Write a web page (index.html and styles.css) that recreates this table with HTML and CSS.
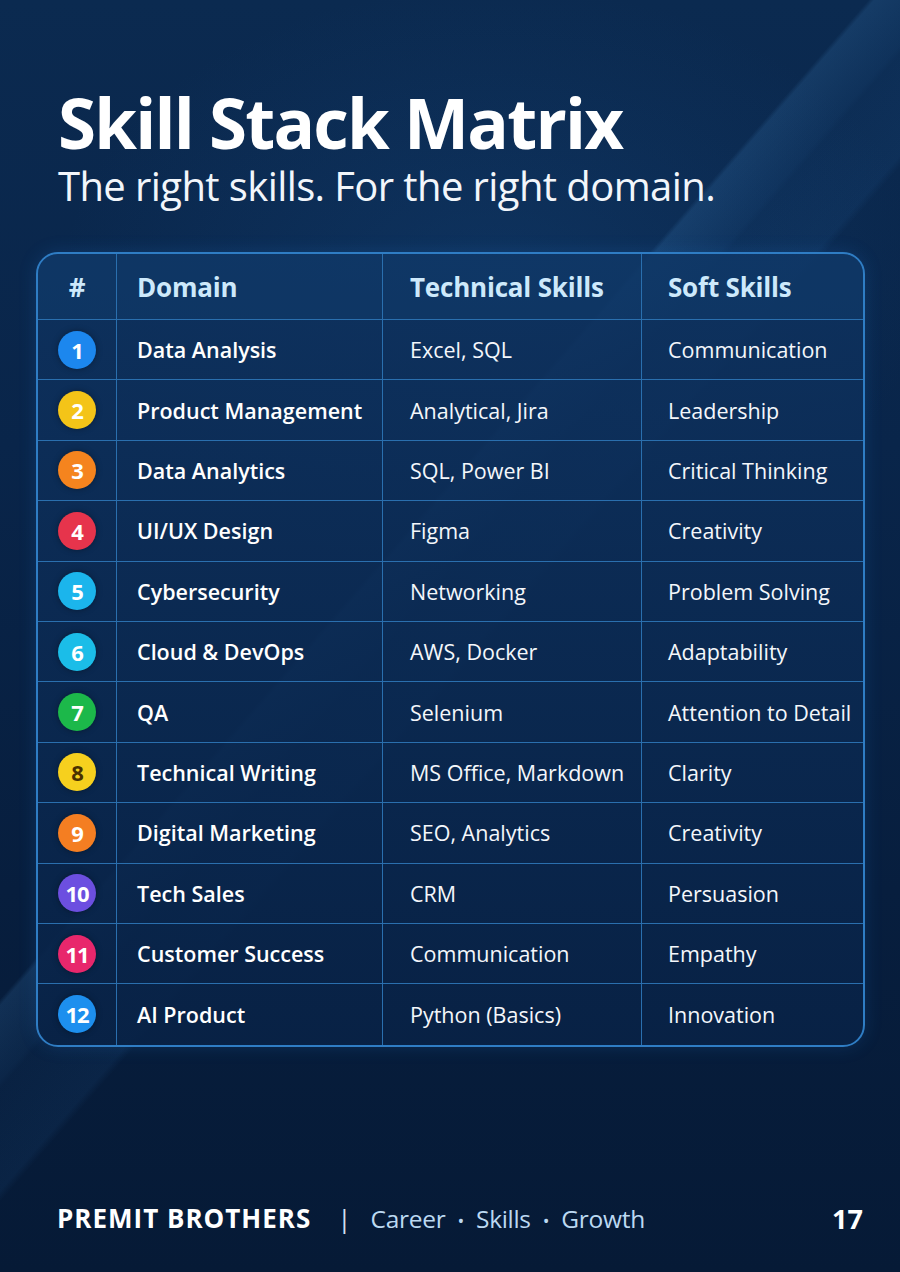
FILE: index.html
```html
<!DOCTYPE html>
<html lang="en">
<head>
<meta charset="utf-8">
<title>Skill Stack Matrix</title>
<link rel="stylesheet" href="styles.css">
</head>
<body>
<div class="page">
  <header class="hero">
    <h1 class="title">Skill Stack Matrix</h1>
    <p class="subtitle">The right skills. For the right domain.</p>
  </header>

  <div class="matrix">
    <div class="cell head num-col">#</div>
    <div class="cell head">Domain</div>
    <div class="cell head tech">Technical Skills</div>
    <div class="cell head soft">Soft Skills</div>

    <div class="cell num-col"><span class="badge c1">1</span></div>
    <div class="cell domain">Data Analysis</div>
    <div class="cell tech">Excel, SQL</div>
    <div class="cell soft">Communication</div>

    <div class="cell num-col"><span class="badge c2">2</span></div>
    <div class="cell domain">Product Management</div>
    <div class="cell tech">Analytical, Jira</div>
    <div class="cell soft">Leadership</div>

    <div class="cell num-col"><span class="badge c3">3</span></div>
    <div class="cell domain">Data Analytics</div>
    <div class="cell tech">SQL, Power BI</div>
    <div class="cell soft">Critical Thinking</div>

    <div class="cell num-col"><span class="badge c4">4</span></div>
    <div class="cell domain">UI/UX Design</div>
    <div class="cell tech">Figma</div>
    <div class="cell soft">Creativity</div>

    <div class="cell num-col"><span class="badge c5">5</span></div>
    <div class="cell domain">Cybersecurity</div>
    <div class="cell tech">Networking</div>
    <div class="cell soft">Problem Solving</div>

    <div class="cell num-col"><span class="badge c6">6</span></div>
    <div class="cell domain">Cloud &amp; DevOps</div>
    <div class="cell tech">AWS, Docker</div>
    <div class="cell soft">Adaptability</div>

    <div class="cell num-col"><span class="badge c7">7</span></div>
    <div class="cell domain">QA</div>
    <div class="cell tech">Selenium</div>
    <div class="cell soft">Attention to Detail</div>

    <div class="cell num-col"><span class="badge c8">8</span></div>
    <div class="cell domain">Technical Writing</div>
    <div class="cell tech">MS Office, Markdown</div>
    <div class="cell soft">Clarity</div>

    <div class="cell num-col"><span class="badge c9">9</span></div>
    <div class="cell domain">Digital Marketing</div>
    <div class="cell tech">SEO, Analytics</div>
    <div class="cell soft">Creativity</div>

    <div class="cell num-col"><span class="badge c10">10</span></div>
    <div class="cell domain">Tech Sales</div>
    <div class="cell tech">CRM</div>
    <div class="cell soft">Persuasion</div>

    <div class="cell num-col"><span class="badge c11">11</span></div>
    <div class="cell domain">Customer Success</div>
    <div class="cell tech">Communication</div>
    <div class="cell soft">Empathy</div>

    <div class="cell num-col last"><span class="badge c12">12</span></div>
    <div class="cell domain last">AI Product</div>
    <div class="cell tech last">Python (Basics)</div>
    <div class="cell soft last">Innovation</div>
  </div>

  <footer class="footer">
    <div class="brand">
      <span class="brand-name">PREMIT BROTHERS</span>
      <span class="sep">|</span>
      <span class="tagline">Career <span class="dot">•</span> Skills <span class="dot">•</span> Growth</span>
    </div>
    <span class="page-num">17</span>
  </footer>
</div>
</body>
</html>
```

FILE: styles.css
```css
* { box-sizing: border-box; }

html, body {
  margin: 0;
  padding: 0;
}

body {
  width: 900px;
  height: 1272px;
  background: #07203f;
  font-family: "Open Sans", "Noto Sans", "Liberation Sans", sans-serif;
  color: #ffffff;
}

.page {
  width: 900px;
  height: 1272px;
  display: flex;
  flex-direction: column;
  padding: 81px 35px 0 36px;
  background:
    linear-gradient(131deg,
      rgba(0,0,0,0) 43.3%,
      rgba(80,160,230,0.15) 43.6%,
      rgba(60,140,215,0.09) 46.8%,
      rgba(50,125,200,0.06) 47.2%,
      rgba(50,125,200,0.09) 51.6%,
      rgba(0,0,0,0) 52.1%),
    radial-gradient(ellipse 620px 420px at 55% 22%, rgba(25,80,140,0.28), rgba(0,0,0,0) 70%),
    linear-gradient(180deg, #0b2a50 0%, #09254a 35%, #071e3e 70%, #061a36 100%);
}

.hero {
  padding-left: 22px;
}

.title {
  margin: 0;
  font-size: 69px;
  line-height: 82px;
  font-weight: 700;
  letter-spacing: -1.8px;
  color: #ffffff;
}

.subtitle {
  margin: 0;
  font-size: 40px;
  line-height: 46px;
  font-weight: 400;
  letter-spacing: -0.6px;
  color: #f2f6fb;
}

.matrix {
  margin-top: 43px;
  display: grid;
  grid-template-columns: 79px 266px 259px 1fr;
  grid-template-rows: 66px repeat(12, 60.4px);
  border: 2px solid #2f7dc4;
  border-radius: 22px;
  overflow: hidden;
  background:
    linear-gradient(180deg, rgba(14,50,95,0.88), rgba(8,34,70,0.9));
  box-shadow: 0 0 18px rgba(40, 130, 220, 0.18);
}

.cell {
  display: flex;
  align-items: center;
  border-right: 1.5px solid #2a6fae;
  border-bottom: 1.5px solid #2a6fae;
  font-size: 21.5px;
  color: #f4f7fb;
  padding-left: 20px;
  white-space: nowrap;
}

.cell.soft { border-right: none; padding-left: 26px; }
.cell.tech { padding-left: 27px; }
.cell.last { border-bottom: none; }

.cell.num-col {
  justify-content: center;
  padding-left: 0;
}

.cell.head {
  font-size: 26px;
  font-weight: 700;
  color: #cde9fb;
  letter-spacing: -0.2px;
  background: rgba(20, 70, 125, 0.25);
}

.cell.domain {
  font-weight: 600;
  color: #ffffff;
}

.badge {
  width: 38px;
  height: 38px;
  border-radius: 50%;
  display: flex;
  align-items: center;
  justify-content: center;
  font-size: 22px;
  font-weight: 700;
  color: #ffffff;
  letter-spacing: -1px;
  box-shadow: 0 0 6px rgba(0,0,0,0.35);
}

.c1  { background: #1c87ee; }
.c2  { background: #f4c418; }
.c3  { background: #f5841e; }
.c4  { background: #e6344c; }
.c5  { background: #1bb5ec; }
.c6  { background: #1bbde8; }
.c7  { background: #1cb84a; }
.c8  { background: #f6d01e; color: #4a3000; }
.c9  { background: #f47e22; }
.c10 { background: #6c4fe0; }
.c11 { background: #e8276c; }
.c12 { background: #1d8fee; }

.footer {
  margin-top: auto;
  height: 108px;
  display: flex;
  align-items: center;
  justify-content: space-between;
  padding: 0 2px 0 21px;
}

.brand {
  display: flex;
  align-items: baseline;
}

.brand-name {
  font-size: 26px;
  font-weight: 700;
  color: #ffffff;
  letter-spacing: 1px;
}

.sep {
  margin: 0 19px 0 26px;
  font-size: 26px;
  color: #cfe0f0;
}

.tagline {
  font-size: 24.5px;
  color: #bcd9f2;
  letter-spacing: -0.3px;
}

.dot {
  margin: 0 6px;
  font-size: 18px;
}

.page-num {
  font-size: 27px;
  font-weight: 700;
  color: #ffffff;
}
```
